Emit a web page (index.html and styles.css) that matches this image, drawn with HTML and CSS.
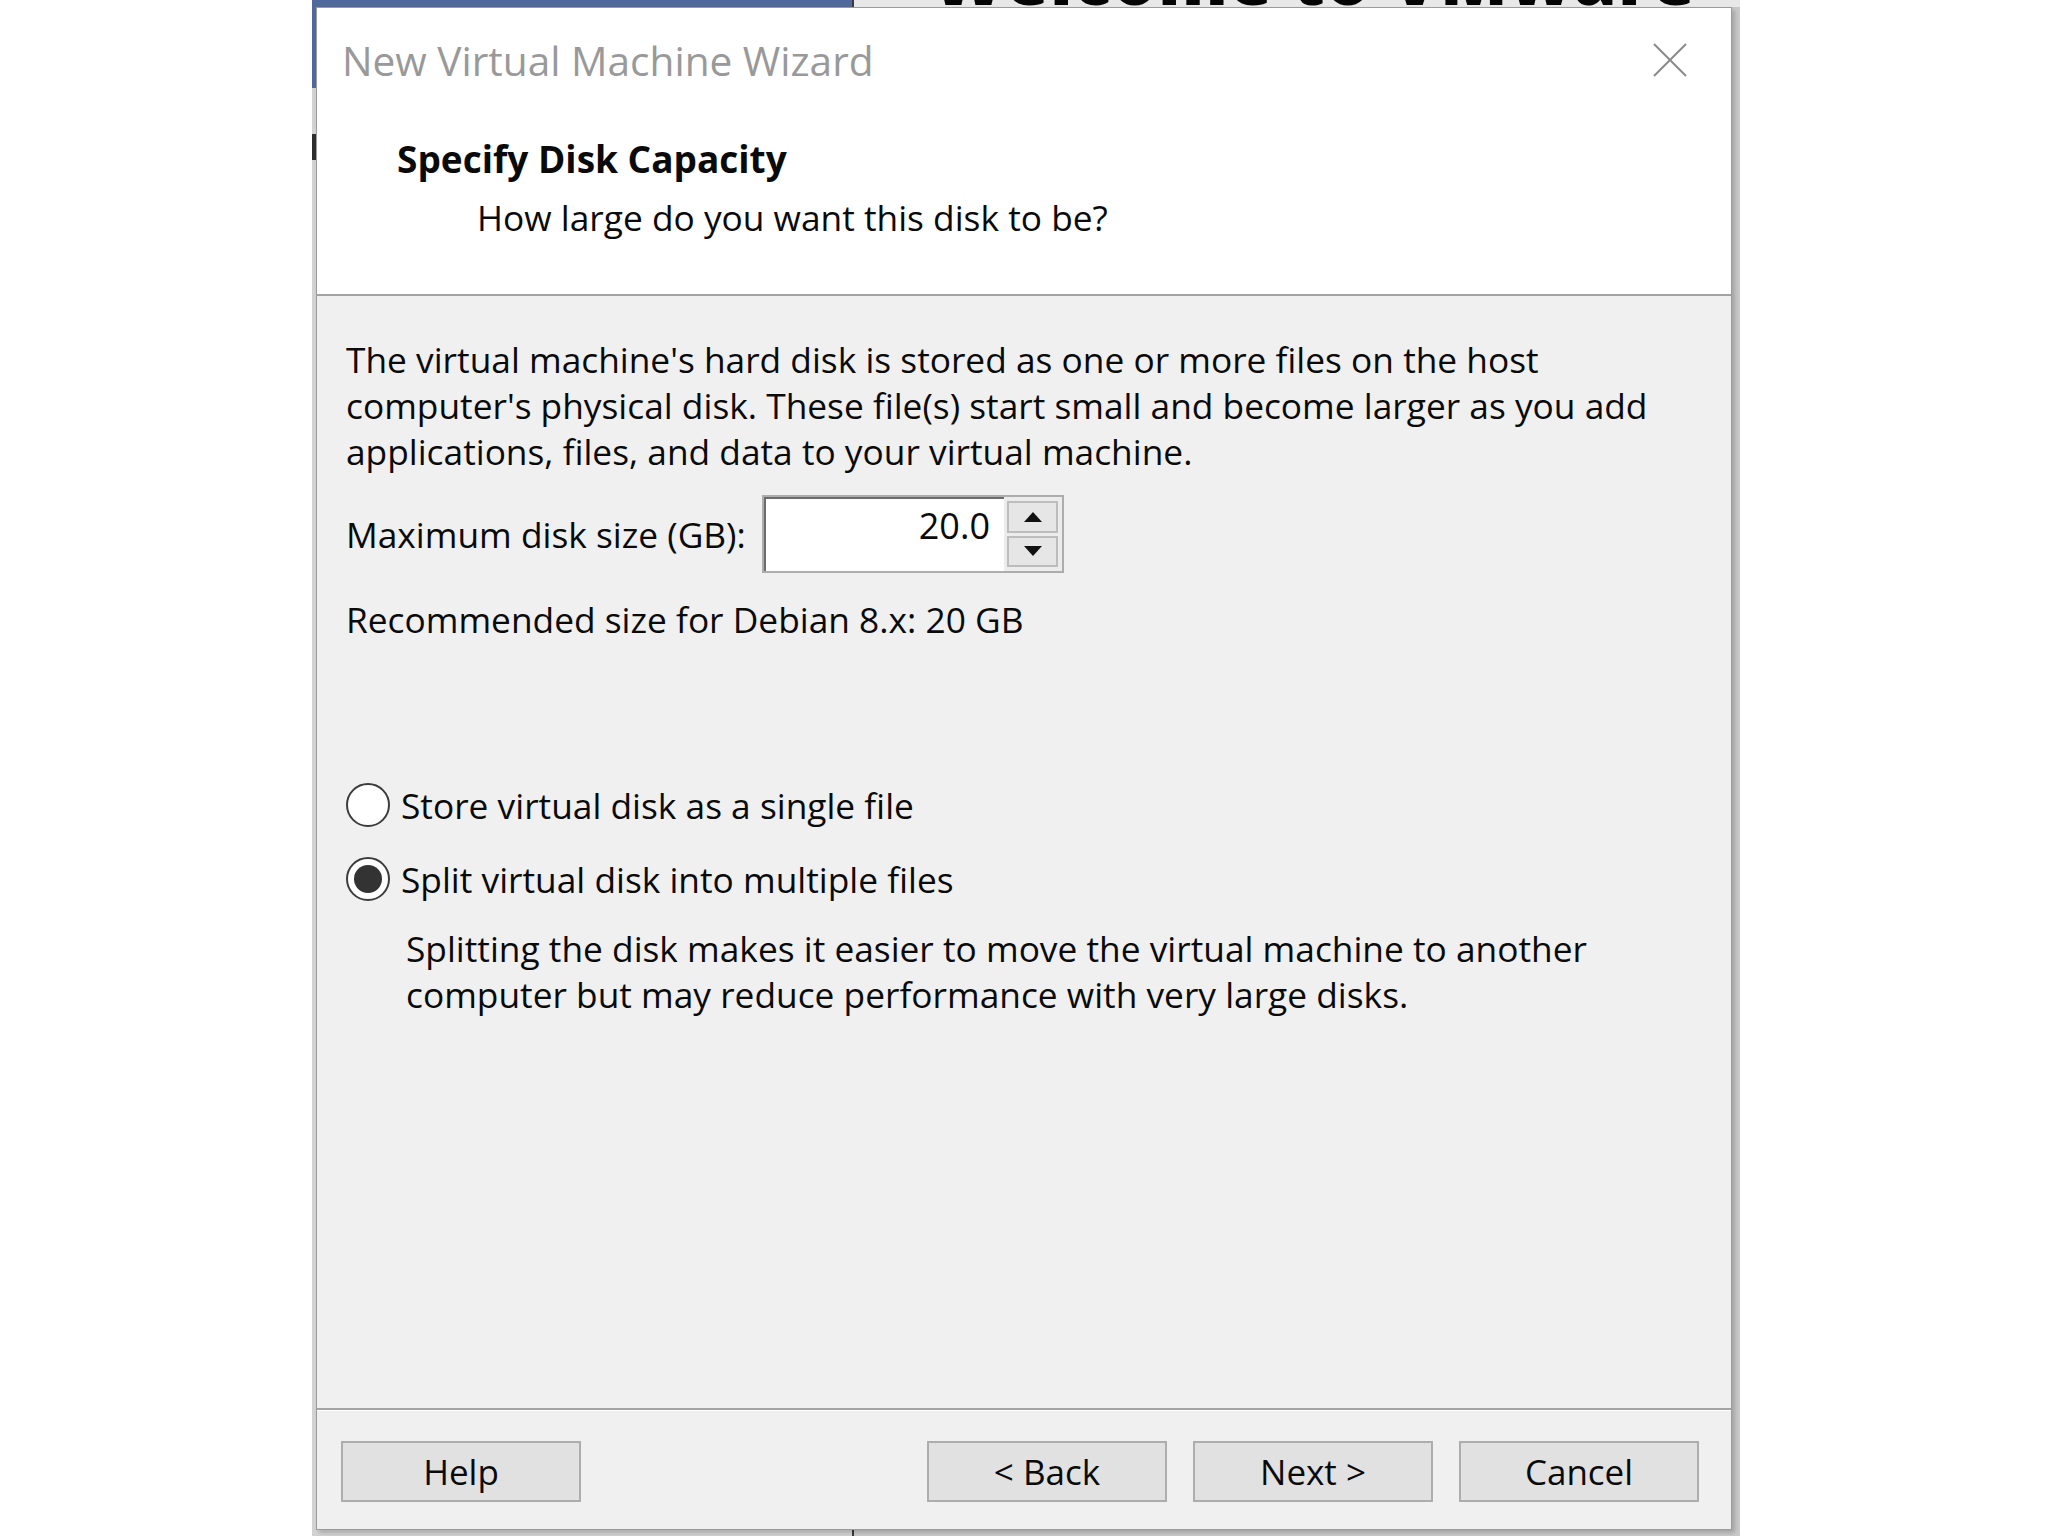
FILE: index.html
```html
<!DOCTYPE html>
<html lang="en">
<head>
<meta charset="utf-8">
<title>New Virtual Machine Wizard</title>
<link rel="stylesheet" href="styles.css">
</head>
<body>
<div class="desktop">
  <div class="bgwin">
    <div class="bg-left">
      <div class="bg-left-top"></div>
      <div class="bg-mark"></div>
    </div>
    <div class="bg-right">
      <div class="bg-right-top"><span>Welcome to VMware</span></div>
    </div>
  </div>

  <div class="dialog">
    <div class="header">
      <div class="title">New Virtual Machine Wizard</div>
      <svg class="close" width="34" height="34" viewBox="0 0 34 34" aria-label="Close">
        <line x1="1" y1="1" x2="33" y2="33" stroke="#8a8a8a" stroke-width="2"/>
        <line x1="33" y1="1" x2="1" y2="33" stroke="#8a8a8a" stroke-width="2"/>
      </svg>
      <div class="heading">Specify Disk Capacity</div>
      <div class="subheading">How large do you want this disk to be?</div>
    </div>

    <div class="content">
      <p class="intro">The virtual machine's hard disk is stored as one or more files on the host<br>computer's physical disk. These file(s) start small and become larger as you add<br>applications, files, and data to your virtual machine.</p>

      <div class="size-row">
        <span class="size-label">Maximum disk size (GB):</span>
        <div class="spinbox">
          <div class="spin-input">20.0</div>
          <div class="spin-buttons">
            <div class="spin-btn">
              <svg width="18" height="10" viewBox="0 0 18 10"><polygon points="0,10 18,10 9,0" fill="#111"/></svg>
            </div>
            <div class="spin-btn">
              <svg width="18" height="10" viewBox="0 0 18 10"><polygon points="0,0 18,0 9,10" fill="#111"/></svg>
            </div>
          </div>
        </div>
      </div>

      <p class="recommend">Recommended size for Debian 8.x: 20 GB</p>

      <div class="options">
        <div class="radio">
          <span class="radio-circle"></span>
          <span class="radio-label">Store virtual disk as a single file</span>
        </div>
        <div class="radio checked">
          <span class="radio-circle"></span>
          <span class="radio-label">Split virtual disk into multiple files</span>
        </div>
        <p class="note">Splitting the disk makes it easier to move the virtual machine to another<br>computer but may reduce performance with very large disks.</p>
      </div>
    </div>

    <div class="footer">
      <button class="btn btn-help">Help</button>
      <button class="btn">&lt; Back</button>
      <button class="btn">Next &gt;</button>
      <button class="btn">Cancel</button>
    </div>
  </div>
</div>
</body>
</html>
```
FILE: styles.css
```css
html, body {
  margin: 0;
  padding: 0;
  background: #ffffff;
}

.desktop {
  position: relative;
  width: 2048px;
  height: 1536px;
  overflow: hidden;
  background: #ffffff;
  font-family: "Open Sans", "Noto Sans", sans-serif;
  color: #0a0a0a;
}

/* window behind the dialog */
.bgwin {
  position: absolute;
  left: 312px;
  top: 0;
  width: 1428px;
  height: 1536px;
  display: flex;
  background: #c8c8c8;
}

.bg-left {
  flex: 0 0 540px;
  background: #d2d2d2;
  border-right: 2px solid #3a3a3a;
}

.bg-left-top {
  height: 88px;
  background: #50699a;
}

.bg-mark {
  margin-top: 46px;
  width: 4px;
  height: 26px;
  background: #2e2e2e;
}

.bg-right {
  flex: 1;
  min-width: 0;
  overflow: hidden;
  background: #c9c9c9;
}

.bg-right-top {
  height: 7px;
  overflow: hidden;
  background: #e8e8e8;
  padding-left: 78px;
}

.bg-right-top span {
  display: block;
  font-weight: 800;
  font-size: 70px;
  line-height: 70px;
  margin-top: -57px;
  color: #050505;
  white-space: nowrap;
  letter-spacing: 1px;
}

/* dialog */
.dialog {
  position: absolute;
  left: 316px;
  top: 7px;
  width: 1416px;
  height: 1523px;
  box-sizing: border-box;
  border: 1px solid #9b9b9b;
  display: flex;
  flex-direction: column;
  box-shadow: 3px 3px 4px rgba(0, 0, 0, 0.18);
}

.header {
  position: relative;
  height: 288px;
  box-sizing: border-box;
  flex: 0 0 auto;
  background: #ffffff;
  border-bottom: 2px solid #a3a3a3;
  padding: 25px 0 0 25px;
}

.title {
  font-size: 40.6px;
  line-height: 56px;
  color: #999999;
  white-space: nowrap;
}

.close {
  position: absolute;
  right: 44px;
  top: 35px;
}

.heading {
  margin: 47px 0 0 55px;
  font-size: 37px;
  font-weight: 700;
  line-height: 46px;
  white-space: nowrap;
}

.subheading {
  margin: 12px 0 0 135px;
  font-size: 35.3px;
  line-height: 46px;
  white-space: nowrap;
}

.content {
  flex: 1;
  background: #f0f0f0;
  padding: 40px 0 0 29px;
  font-size: 35.3px;
  line-height: 46px;
}

.intro {
  margin: 0;
  white-space: nowrap;
}

.size-row {
  display: flex;
  align-items: center;
  margin-top: 21px;
}

.size-label {
  flex: 0 0 416px;
  white-space: nowrap;
}

.spinbox {
  display: flex;
  width: 302px;
  height: 78px;
  box-sizing: border-box;
  border: 2px solid #adadad;
  background: #ececec;
}

.spin-input {
  flex: 0 0 240px;
  box-sizing: border-box;
  background: #ffffff;
  border-top: 2px solid #6c6c6c;
  border-left: 2px solid #6c6c6c;
  text-align: right;
  padding-right: 14px;
  font-size: 36px;
  line-height: 54px;
}

.spin-buttons {
  flex: 1;
  display: flex;
  flex-direction: column;
  gap: 3px;
  padding: 4px 4px 4px 3px;
}

.spin-btn {
  flex: 1;
  display: flex;
  align-items: center;
  justify-content: center;
  background: #e6e6e6;
  border: 2px solid #bdbdbd;
}

.recommend {
  margin: 23px 0 0 0;
  white-space: nowrap;
}

.options {
  margin-top: 140px;
}

.radio {
  display: flex;
  align-items: center;
  gap: 11px;
  height: 46px;
  white-space: nowrap;
}

.radio + .radio {
  margin-top: 28px;
}

.radio-circle {
  position: relative;
  flex: 0 0 auto;
  width: 44px;
  height: 44px;
  box-sizing: border-box;
  border: 2px solid #3c3c3c;
  border-radius: 50%;
  background: #ffffff;
}

.radio.checked .radio-circle::after {
  content: "";
  position: absolute;
  left: 6px;
  top: 6px;
  width: 28px;
  height: 28px;
  border-radius: 50%;
  background: #333333;
}

.note {
  margin: 23px 0 0 0;
  padding-left: 60px;
  white-space: nowrap;
}

.footer {
  flex: 0 0 121px;
  box-sizing: border-box;
  background: #f0f0f0;
  border-top: 2px solid #a3a3a3;
  box-shadow: inset 0 1px 0 #ffffff;
  padding: 31px 32px 0 24px;
  display: flex;
  align-items: flex-start;
  gap: 26px;
}

.btn {
  width: 240px;
  height: 61px;
  box-sizing: border-box;
  padding: 0;
  margin: 0;
  background: #e1e1e1;
  border: 2px solid #adadad;
  border-radius: 0;
  font-family: "Open Sans", "Noto Sans", sans-serif;
  font-size: 35px;
  line-height: 55px;
  color: #0a0a0a;
}

.btn-help {
  margin-right: auto;
}
```
